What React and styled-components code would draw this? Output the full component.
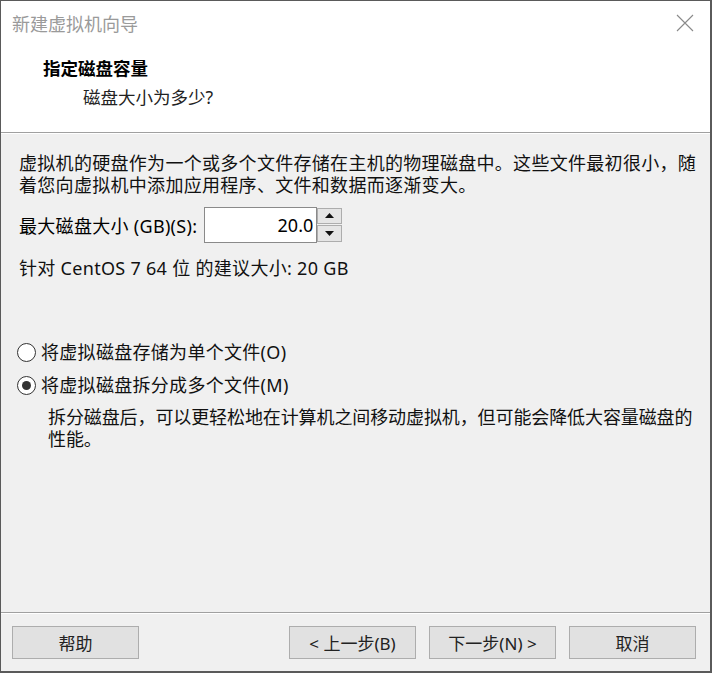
import React from 'react'
import styled, { createGlobalStyle } from 'styled-components'

const GlobalStyle = createGlobalStyle`
  html, body {
    margin: 0;
    padding: 0;
    background: #f0f0f0;
  }
  * {
    box-sizing: border-box;
  }
`

const FONT = `"Noto Sans", "Noto Sans CJK SC", sans-serif`

const Window = styled.div`
  width: 712px;
  height: 673px;
  display: flex;
  flex-direction: column;
  background: #f0f0f0;
  border: 1px solid #5a5a5a;
  border-right-width: 2px;
  border-bottom-width: 2px;
  font-family: ${FONT};
  color: #000;
`

const Top = styled.div`
  background: #fff;
  border-bottom: 1px solid #a0a0a0;
  box-shadow: 0 1px 0 #fff;
`

const TitleBar = styled.div`
  height: 43px;
  display: flex;
  align-items: center;
  justify-content: space-between;
  padding: 0 16px 0 11px;
`

const WindowTitle = styled.span`
  font-size: 18px;
  color: #9a9a9a;
`

const CloseButton = styled.button`
  border: none;
  background: none;
  padding: 0;
  width: 18px;
  height: 18px;
  display: flex;
  cursor: pointer;
`

const Heading = styled.div`
  padding: 12px 0 23px 42px;
  display: flex;
  flex-direction: column;
  gap: 5px;
`

const HeadingTitle = styled.div`
  font-size: 17.5px;
  font-weight: 700;
  line-height: 24px;
`

const HeadingSub = styled.div`
  font-size: 17.5px;
  line-height: 24px;
  padding-left: 40px;
  color: #222;
`

const Body = styled.div`
  flex: 1;
  padding: 18px 18px 0;
  display: flex;
  flex-direction: column;
  font-size: 18px;
  letter-spacing: 0.3px;
  margin-top: 1px;
`

const Line = styled.div`
  line-height: 22px;
  white-space: nowrap;
  color: #111;
`

const SizeRow = styled.div`
  margin-top: 10px;
  display: flex;
  align-items: center;
  gap: 7px;
  height: 37px;
`

const SpinBox = styled.div`
  display: flex;
  height: 36px;
`

const SpinInput = styled.input`
  width: 113px;
  height: 36px;
  border: 1px solid #8a8a8a;
  background: #fff;
  text-align: right;
  padding: 0 3px 0 4px;
  font-family: ${FONT};
  font-size: 18px;
  color: #000;
  outline: none;
`

const SpinButtons = styled.div`
  width: 25px;
  display: flex;
  flex-direction: column;
  gap: 1px;
  padding: 1px 0;
`

const SpinButton = styled.button`
  flex: 1;
  border: 1px solid #adadad;
  background: #e5e5e5;
  padding: 0;
  display: flex;
  align-items: center;
  justify-content: center;
`

const Recommend = styled(Line)`
  margin-top: 14px;
`

const Options = styled.div`
  margin-top: 62px;
  display: flex;
  flex-direction: column;
  gap: 11px;
`

const RadioRow = styled.label`
  display: flex;
  align-items: center;
  gap: 5px;
  line-height: 22px;
  margin-left: -2px;
  color: #111;
`

const RadioCircle = styled.span`
  width: 19px;
  height: 19px;
  border-radius: 50%;
  border: 1px solid #333;
  background: #fff;
  display: flex;
  align-items: center;
  justify-content: center;
  &::after {
    content: '';
    width: 9px;
    height: 9px;
    border-radius: 50%;
    background: ${p => (p.$checked ? '#333' : 'transparent')};
  }
`

const Description = styled.div`
  margin-top: 10px;
  padding-left: 29px;
  letter-spacing: -0.1px;
`

const Footer = styled.div`
  border-top: 1px solid #a0a0a0;
  box-shadow: inset 0 1px 0 #fff;
  height: 59px;
  padding: 13px 14px 0 11px;
  display: flex;
  align-items: flex-start;
`

const Button = styled.button`
  width: 127px;
  height: 33px;
  border: 1px solid #adadad;
  background: #e1e1e1;
  font-family: ${FONT};
  font-size: 17px;
  color: #222;
  padding: 0;
  margin-left: ${p => p.$gap || 0}px;
`

const Spacer = styled.div`
  flex: 1;
`

const CloseIcon = () => (
  <svg width="18" height="18" viewBox="0 0 18 18">
    <path d="M1 1 L17 17 M17 1 L1 17" stroke="#8a8a8a" strokeWidth="1.1" fill="none" />
  </svg>
)

const Arrow = ({ up }) => (
  <svg width="9" height="5" viewBox="0 0 9 5">
    <path d={up ? 'M0 5 L4.5 0 L9 5 Z' : 'M0 0 L4.5 5 L9 0 Z'} fill="#111" />
  </svg>
)

const Radio = ({ checked, children }) => (
  <RadioRow>
    <RadioCircle $checked={checked} />
    {children}
  </RadioRow>
)

export default function App() {
  return (
    <>
      <GlobalStyle />
      <Window>
        <Top>
          <TitleBar>
            <WindowTitle>新建虚拟机向导</WindowTitle>
            <CloseButton aria-label="关闭">
              <CloseIcon />
            </CloseButton>
          </TitleBar>
          <Heading>
            <HeadingTitle>指定磁盘容量</HeadingTitle>
            <HeadingSub>磁盘大小为多少?</HeadingSub>
          </Heading>
        </Top>
        <Body>
          <Line>虚拟机的硬盘作为一个或多个文件存储在主机的物理磁盘中。这些文件最初很小，随</Line>
          <Line>着您向虚拟机中添加应用程序、文件和数据而逐渐变大。</Line>
          <SizeRow>
            <span>最大磁盘大小 (GB)(S):</span>
            <SpinBox>
              <SpinInput defaultValue="20.0" />
              <SpinButtons>
                <SpinButton><Arrow up /></SpinButton>
                <SpinButton><Arrow /></SpinButton>
              </SpinButtons>
            </SpinBox>
          </SizeRow>
          <Recommend>针对 CentOS 7 64 位 的建议大小: 20 GB</Recommend>
          <Options>
            <Radio>将虚拟磁盘存储为单个文件(O)</Radio>
            <Radio checked>将虚拟磁盘拆分成多个文件(M)</Radio>
          </Options>
          <Description>
            <Line>拆分磁盘后，可以更轻松地在计算机之间移动虚拟机，但可能会降低大容量磁盘的</Line>
            <Line>性能。</Line>
          </Description>
        </Body>
        <Footer>
          <Button>帮助</Button>
          <Spacer />
          <Button>&lt; 上一步(B)</Button>
          <Button $gap={13}>下一步(N) &gt;</Button>
          <Button $gap={13}>取消</Button>
        </Footer>
      </Window>
    </>
  )
}
